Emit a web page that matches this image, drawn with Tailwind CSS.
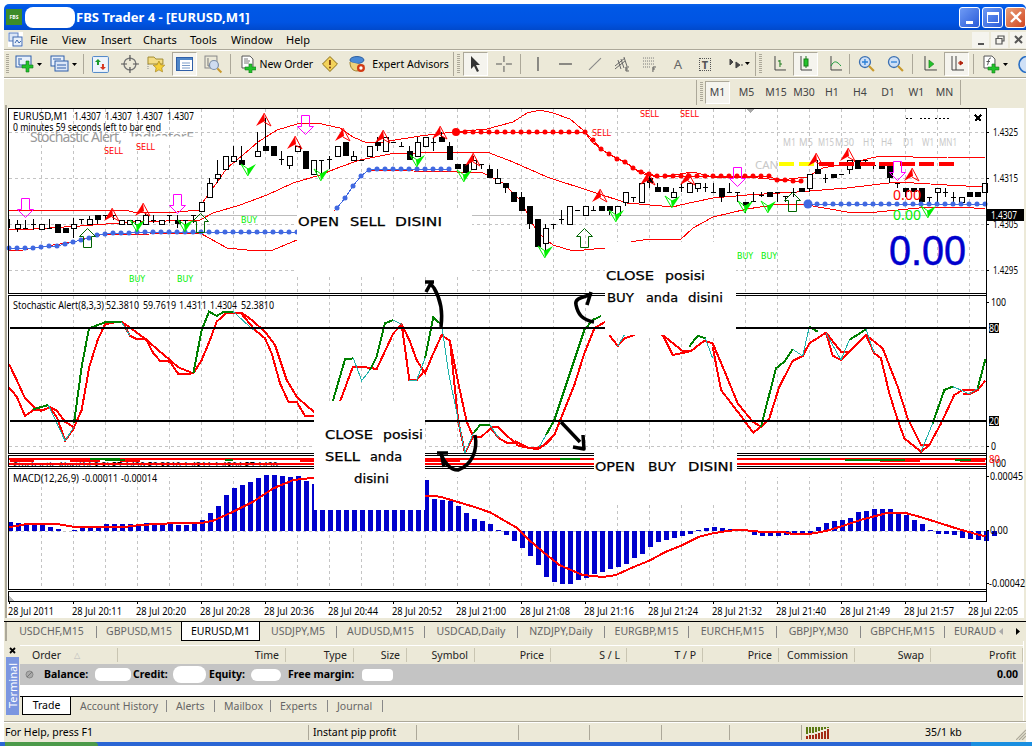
<!DOCTYPE html>
<html lang="en">
<head>
  <meta charset="UTF-8" />
  <title>FBS Trader 4 - [EURUSD,M1]</title>
  <script src="https://cdn.jsdelivr.net/npm/@tailwindcss/browser@4"></script>
</head>
<body class="w-[1032px] h-[746px] overflow-hidden bg-white font-['Noto_Sans',sans-serif] text-[10.5px] leading-none text-black">

<div class="pt-[4px] pl-[4px] w-[1026px]">
  <!-- title bar -->
  <div class="h-[26px] rounded-t-[5px] bg-[linear-gradient(#0a62ea_0%,#0058e6_12%,#0054e3_70%,#0049cc_100%)] flex items-center">
    <div class="ml-[2px] w-[16px] h-[16px] bg-[#3c8c28] flex items-center justify-center">
      <span class="text-[5px] font-bold text-white">FBS</span>
    </div>
    <div class="ml-[3px] w-[50px] h-[21px] rounded-[8px] bg-white"></div>
    <span class="ml-[1px] text-[13px] font-bold text-white">FBS Trader 4 - [EURUSD,M1]</span>
    <div class="ml-auto flex gap-[2px] mr-[0px]">
      <div class="w-[21px] h-[21px] rounded-[3px] border border-white bg-[linear-gradient(135deg,#6f9bf5,#2a5bd8)] flex items-end justify-center pb-[3px]"><div class="w-[7px] h-[3px] bg-white"></div></div>
      <div class="w-[21px] h-[21px] rounded-[3px] border border-white bg-[linear-gradient(135deg,#6f9bf5,#2a5bd8)] flex items-center justify-center"><div class="w-[12px] h-[11px] border border-white border-t-[3px]"></div></div>
      <div class="w-[21px] h-[21px] rounded-[3px] border border-white bg-[linear-gradient(135deg,#e9a27c,#d2451e)] flex items-center justify-center">
        <svg width="12" height="12" viewBox="0 0 12 12"><path d="M1 1 L11 11 M11 1 L1 11" stroke="#fff" stroke-width="2.4"/></svg>
      </div>
    </div>
  </div>

  <!-- menu -->
  <div class="h-[20px] bg-[#ece9d8] flex items-center border-b border-[#aca899] text-[11px]">
    <svg class="ml-[4px]" width="15" height="15" viewBox="0 0 15 15"><rect x="0" y="0" width="15" height="15" fill="#fff"/><rect x="1" y="1" width="9" height="8" fill="#dbe6f7" stroke="#5a7fc0"/><rect x="5" y="5" width="9" height="9" fill="#e8f0fb" stroke="#3f69ad"/><path d="M7 11l2-3 2 3 2-2" fill="none" stroke="#3f69ad"/></svg>
    <span class="ml-[7px] w-[32px]">File</span>
    <span class="w-[39px]">View</span>
    <span class="w-[42px]">Insert</span>
    <span class="w-[47px]">Charts</span>
    <span class="w-[41px]">Tools</span>
    <span class="w-[55px]">Window</span>
    <span>Help</span>
    <div class="ml-auto flex gap-[2px] text-[#444]">
      <div class="w-[17px] h-[16px] bg-[#f5f4ee] flex items-end justify-center pb-[3px]"><div class="w-[6px] h-[2px] bg-[#555]"></div></div>
      <div class="w-[17px] h-[16px] bg-[#f5f4ee] flex items-center justify-center">
        <svg width="10" height="10" viewBox="0 0 10 10"><path d="M3 3V1h6v5H7M1 3.5h6v5.500H1z" fill="none" stroke="#555" stroke-width="1.200"/></svg>
      </div>
      <div class="w-[16px] h-[16px] bg-[#f5f4ee] flex items-center justify-center">
        <svg width="9" height="9" viewBox="0 0 9 9"><path d="M1 1 L8 8 M8 1 L1 8" stroke="#555" stroke-width="2"/></svg>
      </div>
    </div>
  </div>

  <!-- main toolbar -->
  <div class="h-[28px] bg-[#ece9d8] border-t border-white border-b border-b-[#aca899] flex items-center overflow-hidden">
    <div class="ml-[2px] w-[3px] h-[20px] shrink-0 bg-[repeating-linear-gradient(#aca899_0,#aca899_1px,#ece9d8_1px,#ece9d8_2px)]"></div>
    <div class="ml-[6px] w-[35px] shrink-0 flex items-center">
      <svg width="20" height="18" viewBox="0 0 20 18"><rect x="1" y="1" width="15" height="11" fill="#e8f0fb" stroke="#2f5fa8"/><path d="M4 3v7h9M6 3v2" stroke="#2f5fa8" fill="none"/><path d="M11 6h3v4h4v3h-4v4h-3v-4H7v-3h4z" fill="#22c32b" stroke="#127a18" stroke-width=".6"/></svg>
      <svg class="ml-[2px]" width="5" height="3" viewBox="0 0 5 3"><path d="M0 0h5L2.500 3z" fill="#000"/></svg>
    </div>
    <div class="w-[33px] shrink-0 flex items-center">
      <svg width="20" height="18" viewBox="0 0 20 18"><rect x="1" y="1" width="13" height="10" fill="#e8f0fb" stroke="#2f5fa8"/><rect x="5" y="6" width="13" height="10" fill="#dbe6f7" stroke="#2f5fa8"/><path d="M3 4h8M7 10h9M7 13h9" stroke="#2f5fa8"/></svg>
      <svg class="ml-[2px]" width="5" height="3" viewBox="0 0 5 3"><path d="M0 0h5L2.500 3z" fill="#000"/></svg>
    </div>
    <div class="w-px h-[20px] bg-[#aca899]"></div>
    <svg class="ml-[8px]" width="17" height="17" viewBox="0 0 17 17"><rect x=".5" y=".5" width="16" height="16" rx="1" fill="#eef4fc" stroke="#4f86c8"/><path d="M6 3l3 3H7v3H5V6H3z" fill="#1c9a2a"/><path d="M11 14l-3-3h2V8h2v3h2z" fill="#d7351f"/></svg>
    <svg class="ml-[12px]" width="18" height="18" viewBox="0 0 18 18"><circle cx="9" cy="9" r="6" fill="none" stroke="#777" stroke-width="1.300"/><path d="M9 0v6M9 12v6M0 9h6M12 9h6" stroke="#555" stroke-width="1.200"/></svg>
    <svg class="ml-[8px]" width="19" height="18" viewBox="0 0 19 18"><path d="M1 2h6l2 2h7v5H1z" fill="#f3dc86" stroke="#a08a30"/><path d="M1 9v6" stroke="#888" stroke-dasharray="1 1"/><path d="M12 6l1.800 3.700 4 .5-3 2.700.8 4-3.600-2-3.600 2 .8-4-3-2.700 4-.5z" fill="#f6cf37" stroke="#a58315" stroke-width=".7"/></svg>
    <div class="ml-[6px] w-[25px] h-[24px] bg-[#f5f4ee] border border-t-[#aca899] border-l-[#aca899] border-r-white border-b-white flex items-center justify-center">
      <svg width="17" height="14" viewBox="0 0 17 14"><rect x=".5" y=".5" width="16" height="13" fill="#fff" stroke="#2f5fa8"/><rect x="1" y="1" width="15" height="2" fill="#4f86c8"/><rect x="1" y="3" width="3" height="10" fill="#4f86c8"/><path d="M6 6h8M6 8.500h8M6 11h8" stroke="#7a9bc8"/></svg>
    </div>
    <svg class="ml-[7px]" width="19" height="19" viewBox="0 0 19 19"><rect x="1" y="1" width="12" height="12" fill="#ece9d8" stroke="#888"/><path d="M4 3v8h8" stroke="#777" fill="none"/><circle cx="10" cy="10" r="4.500" fill="#cfdcf0" stroke="#7d8fa8" stroke-width="1.200"/><path d="M13.500 13.500l4 4" stroke="#c99a2e" stroke-width="2"/></svg>
    <div class="ml-[7px] w-px h-[20px] bg-[#aca899]"></div>
    <svg class="ml-[10px]" width="16" height="18" viewBox="0 0 16 18"><path d="M1 1h8l3 3v9H1z" fill="#fff" stroke="#555"/><path d="M3 4h4M3 6h6M3 8h5" stroke="#777"/><path d="M8 9h3v3h4v3h-4v3H8v-3H4v-3h4z" fill="#22c32b" stroke="#127a18" stroke-width=".6"/></svg>
    <span class="ml-[3px] w-[63px] shrink-0">New Order</span>
    <svg width="16" height="16" viewBox="0 0 16 16"><path d="M8 .5L15.500 8 8 15.500.5 8z" fill="#f3d25a" stroke="#8a6d16"/><path d="M8 4v5" stroke="#7a3d10" stroke-width="1.800"/><circle cx="8" cy="11.500" r="1" fill="#7a3d10"/></svg>
    <svg class="ml-[11px]" width="17" height="18" viewBox="0 0 17 18"><ellipse cx="8" cy="5" rx="7" ry="3.500" fill="#4b8ad6" stroke="#2a5c9c"/><path d="M1 7c0 6 3 9 7 9s6-2 7-6" fill="#f0d27a" stroke="#9a7d2a"/><circle cx="12" cy="13" r="4" fill="#d23a14"/><circle cx="12" cy="13" r="1.700" fill="#fff"/></svg>
    <span class="ml-[6px] w-[81px] shrink-0">Expert Advisors</span>
    <div class="w-px h-[24px] bg-[#aca899]"></div>
    <div class="ml-[3px] w-[3px] h-[20px] shrink-0 bg-[repeating-linear-gradient(#aca899_0,#aca899_1px,#ece9d8_1px,#ece9d8_2px)]"></div>
    <div class="ml-[3px] w-[25px] h-[24px] bg-[#f5f4ee] border border-t-[#aca899] border-l-[#aca899] border-r-white border-b-white flex items-center justify-center">
      <svg width="11" height="16" viewBox="0 0 11 16"><path d="M1 0v13l3-3 3 6 2-1-3-6h4z" fill="#333"/></svg>
    </div>
    <svg class="ml-[8px]" width="16" height="16" viewBox="0 0 16 16"><path d="M8 0v6M8 10v6M0 8h6M10 8h6" stroke="#555"/></svg>
    <div class="ml-[8px] w-px h-[20px] bg-[#aca899]"></div>
    <svg class="ml-[16px]" width="2" height="14" viewBox="0 0 2 14"><path d="M1 0v14" stroke="#555" stroke-width="1.300"/></svg>
    <svg class="ml-[20px]" width="13" height="2" viewBox="0 0 13 2"><path d="M0 1h13" stroke="#555" stroke-width="1.300"/></svg>
    <svg class="ml-[16px]" width="14" height="14" viewBox="0 0 14 14"><path d="M1 13L13 1" stroke="#888" stroke-width="1.100"/></svg>
    <svg class="ml-[12px]" width="16" height="16" viewBox="0 0 16 16"><path d="M1 10l10-8M1 13l10-8M4 4l3 9M7 3l3 9M10 1l3 9" stroke="#666" fill="none"/><path d="M12 11h3M12 13h2M12 15h3M12 11v4" stroke="#555"/></svg>
    <svg class="ml-[12px]" width="15" height="16" viewBox="0 0 15 16"><path d="M1 2h12M1 5h12M1 8h12M1 11h8" stroke="#777" stroke-dasharray="1 1"/><path d="M11 11h3M11 13h2M11 11v5" stroke="#555"/></svg>
    <span class="ml-[17px] w-[9px] shrink-0 text-[13px] text-[#666]">A</span>
    <div class="ml-[16px] w-[12px] h-[13px] shrink-0 border border-dotted border-[#555] flex items-center justify-center text-[11px] font-bold text-[#555]">T</div>
    <svg class="ml-[17px]" width="24" height="13" viewBox="0 0 24 13"><path d="M2 1l3 3-3 3zM8 4l4 3-4 3zM13 7h2" fill="#444" stroke="#444"/><path d="M17 4h5l-2.500 3z" fill="#000"/></svg>
    <div class="ml-[3px] w-px h-[24px] bg-[#aca899]"></div>
    <div class="ml-[3px] w-[3px] h-[20px] shrink-0 bg-[repeating-linear-gradient(#aca899_0,#aca899_1px,#ece9d8_1px,#ece9d8_2px)]"></div>
    <svg class="ml-[10px]" width="14" height="16" viewBox="0 0 14 16"><path d="M3 0v14h11" stroke="#444" fill="none"/><path d="M8 4v7M8 5H6M8 8h2" stroke="#1a7a1a" fill="none"/></svg>
    <div class="ml-[7px] w-[25px] h-[24px] bg-[#f5f4ee] border border-t-[#aca899] border-l-[#aca899] border-r-white border-b-white flex items-center justify-center">
      <svg width="14" height="16" viewBox="0 0 14 16"><path d="M3 0v14h11" stroke="#444" fill="none"/><rect x="6" y="3" width="4" height="7" fill="#22c32b" stroke="#1a7a1a"/><path d="M8 0v3M8 10v2" stroke="#1a7a1a"/></svg>
    </div>
    <svg class="ml-[10px]" width="15" height="16" viewBox="0 0 15 16"><path d="M3 0v14h12" stroke="#444" fill="none"/><path d="M3 10c3-6 6-5 10 0" stroke="#1a9a3a" fill="none"/></svg>
    <div class="ml-[7px] w-px h-[20px] bg-[#aca899]"></div>
    <svg class="ml-[8px]" width="17" height="18" viewBox="0 0 17 18"><circle cx="7" cy="7" r="5.500" fill="#cfe0f6" stroke="#3b6fb0" stroke-width="1.300"/><path d="M4 7h6M7 4v6" stroke="#2a7fd6" stroke-width="1.300"/><path d="M11 11l5 5" stroke="#c99a2e" stroke-width="2.200"/></svg>
    <svg class="ml-[12px]" width="17" height="18" viewBox="0 0 17 18"><circle cx="7" cy="7" r="5.500" fill="#cfe0f6" stroke="#3b6fb0" stroke-width="1.300"/><path d="M4 7h6" stroke="#2a7fd6" stroke-width="1.300"/><path d="M11 11l5 5" stroke="#c99a2e" stroke-width="2.200"/></svg>
    <div class="ml-[8px] w-px h-[20px] bg-[#aca899]"></div>
    <svg class="ml-[9px]" width="15" height="16" viewBox="0 0 15 16"><path d="M3 0v14h12" stroke="#444" fill="none"/><path d="M7 4l5 4-5 4z" fill="#22c32b" stroke="#1a7a1a" stroke-width=".6"/></svg>
    <div class="ml-[7px] w-[25px] h-[24px] bg-[#f5f4ee] border border-t-[#aca899] border-l-[#aca899] border-r-white border-b-white flex items-center justify-center">
      <svg width="15" height="16" viewBox="0 0 15 16"><path d="M3 0v14h12M7 0v14" stroke="#444" fill="none"/><path d="M9 7h3M14 7l-3-2v4z" fill="#b0200a" stroke="#b0200a"/></svg>
    </div>
    <div class="ml-[4px] w-px h-[20px] bg-[#aca899]"></div>
    <svg class="ml-[9px]" width="19" height="19" viewBox="0 0 19 19"><path d="M1 1h8l3 3v9H1z" fill="#fff" stroke="#555"/><path d="M4 10c1 0 1-1 1.500-4S7 3 8 3M3.500 6.500h3.500" stroke="#555" fill="none"/><path d="M9 9h3v3h4v3h-4v3H9v-3H5v-3h4z" fill="#22c32b" stroke="#127a18" stroke-width=".6"/></svg>
    <svg class="ml-[1px]" width="5" height="3" viewBox="0 0 5 3"><path d="M0 0h5L2.500 3z" fill="#000"/></svg>
    <svg class="ml-[10px] shrink-0" width="8" height="17" viewBox="0 0 8 17"><circle cx="9" cy="8.500" r="8" fill="#cfe0f6" stroke="#2a6fc4" stroke-width="1.600"/><path d="M9 4v5" stroke="#2a5fa0" fill="none"/></svg>
  </div>

  <!-- timeframe toolbar -->
  <div class="h-[27px] bg-[#ece9d8] flex items-center border-t border-white">
    <div class="ml-[692px] w-px h-[25px] bg-[#aca899]"></div>
    <div class="ml-[3px] w-[3px] h-[20px] bg-[repeating-linear-gradient(#aca899_0,#aca899_1px,#ece9d8_1px,#ece9d8_2px)]"></div>
    <div class="ml-[2px] w-[25px] h-[23px] bg-[#f5f4ee] border border-t-[#aca899] border-l-[#aca899] border-r-white border-b-white flex items-center justify-center text-[#444]">M1</div>
    <span class="w-[31px] text-center ml-[1px] text-[#444]">M5</span>
    <span class="w-[28px] text-center text-[#444]">M15</span>
    <span class="w-[28px] text-center text-[#444]">M30</span>
    <span class="w-[28px] text-center text-[#444]">H1</span>
    <span class="w-[28px] text-center text-[#444]">H4</span>
    <span class="w-[28px] text-center text-[#444]">D1</span>
    <span class="w-[29px] text-center text-[#444]">W1</span>
    <span class="w-[27px] text-center text-[#444]">MN</span>
    <div class="ml-[2px] w-px h-[25px] bg-[#aca899]"></div>
  </div>

  <!-- chart, drawn in page coordinates -->
  <svg id="chart" class="block text-[10.5px]" width="1022" height="516" viewBox="4 105 1022 516" shape-rendering="crispEdges">
    <rect x="4" y="105" width="1022" height="516" fill="#fff"/>
    <rect x="4" y="105" width="1022" height="3" fill="#ece9d8"/>
    <rect x="4" y="105" width="1" height="516" fill="#ece9d8"/>
    <rect x="5" y="105" width="2" height="516" fill="#aca899"/>
    <rect x="1024" y="105" width="2" height="516" fill="#ece9d8"/>
    <rect x="4" y="618" width="1022" height="3" fill="#ece9d8"/>
    <g id="plot"></g>
    <g>
      <g id="heads" lengthAdjust="spacingAndGlyphs"></g>
      <text x="30" y="142" fill="#999" class="text-[14px]" textLength="92">Stochastic Alert,</text>
      <g fill="#c8c8c8" class="text-[11.5px]">
        <text x="783" y="146" textLength="13" lengthAdjust="spacingAndGlyphs">M1</text><text x="799" y="146" textLength="14" lengthAdjust="spacingAndGlyphs">M5</text><text x="818" y="146" textLength="16" lengthAdjust="spacingAndGlyphs">M15</text><text x="835" y="146" textLength="19" lengthAdjust="spacingAndGlyphs">M30</text><text x="863" y="146" textLength="11" lengthAdjust="spacingAndGlyphs">H1</text><text x="881" y="146" textLength="11" lengthAdjust="spacingAndGlyphs">H4</text><text x="903" y="146" textLength="11" lengthAdjust="spacingAndGlyphs">D1</text><text x="922" y="146" textLength="12" lengthAdjust="spacingAndGlyphs">W1</text><text x="939" y="146" textLength="18" lengthAdjust="spacingAndGlyphs">MN1</text>
        <text x="755" y="169">CAN</text>
      </g>
      <text x="893" y="200" fill="#ff0000" class="text-[14px]" textLength="28">0.00</text>
      <text x="893" y="220" fill="#00f000" class="text-[14px]" textLength="28">0.00</text>
      <text x="889" y="265" fill="#0000cd" stroke="#0000cd" stroke-width=".5" class="text-[42px] font-['Liberation_Sans',sans-serif]" textLength="77" lengthAdjust="spacingAndGlyphs">0.00</text>
      <g fill="#ff0000" class="text-[8px] font-['DejaVu_Sans',sans-serif]">
        <text x="104" y="154">SELL</text><text x="136" y="150">SELL</text><text x="640" y="117">SELL</text><text x="680" y="117">SELL</text><text x="592" y="136">SELL</text>
      </g>
      <g fill="#00f000" class="text-[8px] font-['DejaVu_Sans',sans-serif]">
        <text x="129" y="282">BUY</text><text x="177" y="282">BUY</text><text x="241" y="223">BUY</text><text x="737" y="259">BUY</text><text x="761" y="259">BUY</text>
      </g>
    </g>
    <g id="masks"></g>
    <g class="font-['DejaVu_Sans',sans-serif] text-[12px]" fill="#000" stroke="#000" stroke-width=".25">
      <text x="298" y="226" textLength="41" lengthAdjust="spacingAndGlyphs">OPEN</text>
      <text x="350" y="226" textLength="35" lengthAdjust="spacingAndGlyphs">SELL</text>
      <text x="395" y="226" textLength="47" lengthAdjust="spacingAndGlyphs">DISINI</text>
      <text x="606" y="280" textLength="48" lengthAdjust="spacingAndGlyphs">CLOSE</text>
      <text x="665" y="280" textLength="40" lengthAdjust="spacingAndGlyphs">posisi</text>
      <text x="607" y="302" textLength="27" lengthAdjust="spacingAndGlyphs">BUY</text>
      <text x="646" y="302" textLength="32" lengthAdjust="spacingAndGlyphs">anda</text>
      <text x="688" y="302" textLength="35" lengthAdjust="spacingAndGlyphs">disini</text>
      <text x="325" y="439" textLength="48" lengthAdjust="spacingAndGlyphs">CLOSE</text>
      <text x="383" y="439" textLength="40" lengthAdjust="spacingAndGlyphs">posisi</text>
      <text x="325" y="461" textLength="35" lengthAdjust="spacingAndGlyphs">SELL</text>
      <text x="370" y="461" textLength="32" lengthAdjust="spacingAndGlyphs">anda</text>
      <text x="354" y="483" textLength="35" lengthAdjust="spacingAndGlyphs">disini</text>
      <text x="595" y="471" textLength="40" lengthAdjust="spacingAndGlyphs">OPEN</text>
      <text x="648" y="471" textLength="28" lengthAdjust="spacingAndGlyphs">BUY</text>
      <text x="688" y="471" textLength="45" lengthAdjust="spacingAndGlyphs">DISINI</text>
    </g>
    <g fill="none" stroke="#000" stroke-width="3.5" stroke-linejoin="round" shape-rendering="auto">
      <path d="M441 327C443 312 440 298 434 288L430 283M425 282H434M431 283L426 292"/>
      <path d="M594 322C582 320 578 314 576 305C574 298 584 297 592 294M591 292L587 305"/>
      <path d="M561 422L580 442M583 435L584 449L573 447"/>
      <path d="M475 435C478 450 472 465 458 470C450 470 444 462 441 454M437 453H448M441 453L444 467"/>
    </g>
    <g id="axis"></g>
  </svg>

  <!-- symbol tabs -->
  <div class="h-[20px] bg-[#ece9d8] border-t border-black flex items-center text-[#666]">
    <div class="w-[2px] h-[19px] bg-[#aca899] ml-[1px]"></div>
    <span class="w-[89px] text-center">USDCHF,M15</span>
    <div class="w-px h-[12px] bg-[#888]"></div>
    <span class="w-[84px] text-center">GBPUSD,M15</span>
    <div class="w-[79px] h-[19px] bg-white border-x border-b border-black text-black flex items-center justify-center">EURUSD,M1</div>
    <span class="w-[76px] text-center">USDJPY,M5</span>
    <div class="w-px h-[12px] bg-[#888]"></div>
    <span class="w-[87px] text-center">AUDUSD,M15</span>
    <div class="w-px h-[12px] bg-[#888]"></div>
    <span class="w-[92px] text-center">USDCAD,Daily</span>
    <div class="w-px h-[12px] bg-[#888]"></div>
    <span class="w-[86px] text-center">NZDJPY,Daily</span>
    <div class="w-px h-[12px] bg-[#888]"></div>
    <span class="w-[83px] text-center">EURGBP,M15</span>
    <div class="w-px h-[12px] bg-[#888]"></div>
    <span class="w-[87px] text-center">EURCHF,M15</span>
    <div class="w-px h-[12px] bg-[#888]"></div>
    <span class="w-[83px] text-center">GBPJPY,M30</span>
    <div class="w-px h-[12px] bg-[#888]"></div>
    <span class="w-[83px] text-center">GBPCHF,M15</span>
    <div class="w-px h-[12px] bg-[#888]"></div>
    <span class="ml-[9px] w-[42px] overflow-hidden whitespace-nowrap">EURAUD</span>
    <svg class="ml-[3px]" width="4" height="7" viewBox="0 0 4 7"><path d="M4 0v7L0 3.500z" fill="#aaa"/></svg>
    <svg class="ml-[13px]" width="4" height="7" viewBox="0 0 4 7"><path d="M0 0v7l4-3.500z" fill="#000"/></svg>
  </div>

  <!-- terminal -->
  <div class="h-[81px] bg-[#ece9d8] flex border-b border-[#aca899]">
    <div class="w-[16px] flex flex-col items-center pt-[6px]">
      <svg width="7" height="7" viewBox="0 0 7 7"><path d="M1 1l5 5M6 1L1 6" stroke="#000" stroke-width="1.800"/></svg>
      <div class="mt-[3px] w-[13px] h-[58px] bg-[#7b96e0] text-white flex items-center justify-center">
        <span class="[writing-mode:vertical-rl] rotate-180 text-[11px]">Terminal</span>
      </div>
    </div>
    <div class="w-[1004px] flex flex-col pt-[4px] border-r border-white">
      <div class="h-[19px] flex items-center border-t border-white text-[#222]">
        <div class="w-[98px] h-[14px] flex items-center pl-[12px] border-r border-[#c9c5b2]">Order<span class="ml-[13px] text-[#bbb] text-[8px]">△</span></div>
        <div class="w-[168px] h-[14px] flex items-center justify-end pr-[6px] border-r border-[#c9c5b2]">Time</div>
        <div class="w-[68px] h-[14px] flex items-center justify-end pr-[6px] border-r border-[#c9c5b2]">Type</div>
        <div class="w-[53px] h-[14px] flex items-center justify-end pr-[6px] border-r border-[#c9c5b2]">Size</div>
        <div class="w-[68px] h-[14px] flex items-center justify-end pr-[6px] border-r border-[#c9c5b2]">Symbol</div>
        <div class="w-[76px] h-[14px] flex items-center justify-end pr-[6px] border-r border-[#c9c5b2]">Price</div>
        <div class="w-[76px] h-[14px] flex items-center justify-end pr-[6px] border-r border-[#c9c5b2]">S / L</div>
        <div class="w-[76px] h-[14px] flex items-center justify-end pr-[6px] border-r border-[#c9c5b2]">T / P</div>
        <div class="w-[76px] h-[14px] flex items-center justify-end pr-[6px] border-r border-[#c9c5b2]">Price</div>
        <div class="w-[76px] h-[14px] flex items-center justify-end pr-[6px] border-r border-[#c9c5b2]">Commission</div>
        <div class="w-[76px] h-[14px] flex items-center justify-end pr-[6px] border-r border-[#c9c5b2]">Swap</div>
        <div class="w-[92px] h-[14px] flex items-center justify-end pr-[6px] border-r border-[#c9c5b2]">Profit</div>
      </div>
      <div class="h-[21px] bg-[#c4c4c4] flex items-center font-bold">
        <svg class="ml-[5px]" width="9" height="9" viewBox="0 0 9 9"><circle cx="4.500" cy="4.500" r="3.500" fill="#aaa" stroke="#888"/><path d="M2 7l5-5" stroke="#777"/></svg>
        <span class="ml-[10px] w-[47px]">Balance:</span>
        <div class="ml-[4px] w-[36px] h-[13px] rounded-[5px] bg-white"></div>
        <span class="ml-[2px] w-[38px]">Credit:</span>
        <div class="ml-[2px] w-[33px] h-[17px] rounded-[8px] bg-white"></div>
        <span class="ml-[3px] w-[39px]">Equity:</span>
        <div class="ml-[3px] w-[30px] h-[12px] rounded-[6px] bg-white"></div>
        <span class="ml-[7px] w-[70px]">Free margin:</span>
        <div class="ml-[4px] w-[31px] h-[12px] rounded-[4px] bg-white"></div>
        <span class="ml-auto mr-[5px]">0.00</span>
      </div>
      <div class="h-[11px] bg-white"></div>
      <div class="h-[21px] border-t border-black flex items-start text-[#666]">
        <div class="ml-[2px] w-[49px] h-[18px] bg-white border-x border-b border-black text-black flex items-center justify-center">Trade</div>
        <span class="ml-[9px] w-[86px] h-[18px] flex items-center">Account History</span>
        <div class="mt-[3px] w-px h-[12px] bg-[#888]"></div>
        <span class="ml-[9px] w-[38px] h-[18px] flex items-center">Alerts</span>
        <div class="mt-[3px] w-px h-[12px] bg-[#888]"></div>
        <span class="ml-[9px] w-[46px] h-[18px] flex items-center">Mailbox</span>
        <div class="mt-[3px] w-px h-[12px] bg-[#888]"></div>
        <span class="ml-[9px] w-[47px] h-[18px] flex items-center">Experts</span>
        <div class="mt-[3px] w-px h-[12px] bg-[#888]"></div>
        <span class="ml-[9px] w-[45px] h-[18px] flex items-center">Journal</span>
        <div class="mt-[3px] w-px h-[12px] bg-[#888]"></div>
      </div>
    </div>
  </div>

  <!-- status bar -->
  <div class="h-[20px] bg-[#ece9d8] flex items-center border-t border-white">
    <span class="w-[304px] pl-[1px]">For Help, press F1</span>
    <div class="w-[108px] h-[15px] flex items-center pl-[4px] border-l border-[#aca899]">Instant pip profit</div>
    <div class="w-[102px] h-[15px] border-l border-[#aca899]"></div>
    <div class="w-[71px] h-[15px] border-l border-[#aca899]"></div>
    <div class="w-[72px] h-[15px] border-l border-[#aca899]"></div>
    <div class="w-[68px] h-[15px] border-l border-[#aca899]"></div>
    <div class="w-[72px] h-[15px] border-l border-[#aca899]"></div>
    <div class="w-[66px] h-[15px] border-l border-[#aca899] flex items-center pl-[4px]">
      <svg width="24" height="12" viewBox="0 0 24 12"><path d="M1 0v7M4 0v6M7 0v6M10 0v5M13 0v4M16 0v3M19 0v2M22 0v1" stroke="#5b7a12" stroke-width="2"/><path d="M1 9v3M4 8v4M7 8v4M10 7v5M13 6v6M16 5v7M19 4v8M22 2v10" stroke="#a32a14" stroke-width="2"/></svg>
    </div>
    <span class="ml-[58px]">35/1 kb</span>
    <svg class="ml-auto" width="10" height="14" viewBox="0 0 10 14"><path d="M0 14L10 4M3 14L10 7M6 14l4-4" stroke="#aca899" stroke-width="1.200"/></svg>
  </div>
</div>

<!-- taskbar sliver -->
<div class="h-[4px] bg-[#2a66d4] flex">
  <div class="ml-[5px] w-[93px] bg-[#4c9a4a] rounded-tr-[4px]"></div>
  <div class="ml-auto w-[61px] bg-[#1a8fe0]"></div>
</div>

<script>
  // reference read at 3x, so coordinates come in zoomed units
  const z = (ox, oy, pts) => pts.map(([x, y]) => [ox + x / 3, oy + y / 3]);
  const line = (pts, color, w) =>
    `<polyline points="${pts.map(p => p.join(",")).join(" ")}" fill="none" stroke="${color}" stroke-width="${w}"/>`;
  // tahoma is narrower than what we have here, squeeze to the measured width
  const tx = (t, x, y, w, fill = "#000") =>
    `<text x="${x}" y="${y}" fill="${fill}" textLength="${w}" lengthAdjust="spacingAndGlyphs">${t}</text>`;

  const RIGHT = 986, L = 8;
  const X = k => 9 + 8 * k;
  let s = "";

  // grid
  const grid = 'stroke-dasharray="3 3"';
  for (let x = 41; x < RIGHT; x += 32) {
    s += `<path d="M${x} 109V293M${x} 296V452M${x} 469V589" stroke="#c4c4c4" ${grid}/>`;
  }
  for (const y of [132, 178, 224, 270]) s += `<path d="M9 ${y}H${RIGHT}" stroke="#c4c4c4" ${grid}/>`;
  s += `<path d="M9 446.500H${RIGHT}" stroke="#c4c4c4" ${grid}/>`;
  s += `<path d="M9 215.500H${RIGHT}" stroke="#bdbdbd"/>`;
  s += `<path d="M9 531.500H${RIGHT}" stroke="#c4c4c4" ${grid}/>`;

  // bollinger bands
  const red = "#f00";
  s += line([[9,210],[125,210],[133,212],[165,213],[200,210],[203,202],[213,188],[227,168],[243,155],[258,142],[277,130],[297,124],[317,123],[340,128],[353,137],[367,143],[383,142],[420,136],[453,132],[487,129],[513,122],[527,113],[540,110],[553,113],[570,119],[583,130],[593,143],[607,153],[627,163],[640,173],[657,177],[680,174],[693,172],[713,177],[747,177],[780,180],[807,177],[823,168],[850,163],[880,156],[913,157],[947,157],[985,158]], red, 1);
  s += line([[9,230],[33,229],[80,226],[133,222],[200,220],[213,213],[240,205],[267,195],[293,183],[320,175],[340,167],[360,160],[390,154],[440,152],[487,152],[513,162],[547,177],[593,192],[627,203],[673,207],[680,205],[713,198],[747,195],[797,192],[847,188],[897,182],[947,185],[985,187]], red, 1);
  s += line([[9,250],[17,251],[40,247],[73,242],[100,235],[200,233],[227,248],[257,251],[273,250],[297,240],[330,216],[337,208],[345,198],[353,186],[361,176],[369,170],[457,172],[483,173],[503,183],[520,200],[537,232],[553,245],[573,251],[605,248],[620,244],[636,241],[650,239],[680,240],[693,228],[713,217],[747,209],[780,204],[807,205],[847,212],[867,213],[887,211],[930,207],[963,207],[985,209]], red, 1);

  // candles [x, bodyTop, bodyBottom, wickTop, wickBottom, fill] : w hollow, b solid, none = dash only
  const c = [
    [9,0,0,219,228],[17,224,228,220,232,"w"],[25,228,229,220,229],[33,224,225,219,230],[41,224,229,224,229,"w"],[49,228,229,219,229],
    [57,224,233,224,233,"b"],[65,228,233,228,233,"b"],[73,224,228,218,238,"w"],[81,219,220,219,224],[89,219,224,216,224,"w"],[97,215,220,215,224,"b"],
    [105,215,216,215,220],[113,215,216,215,220],[121,220,224,220,224,"w"],[129,220,224,220,224,"w"],[137,220,224,220,224,"w"],[145,215,224,213,224,"w"],
    [153,220,221,215,223],[161,220,224,220,224,"w"],[169,215,216,215,223],[177,220,224,215,228,"b"],[185,220,221,220,228],[193,215,216,215,223],
    [201,202,211,202,211,"w"],[209,183,197,178,197,"w"],[217,174,178,160,183,"w"],[225,156,169,156,169,"w"],[233,156,161,146,161,"w"],[241,160,165,146,165,"b"],
    [257,151,156,132,156,"w"],[265,146,151,118,151,"b"],[273,146,156,146,156,"b"],[281,159,160,151,165],[289,156,165,156,169,"w"],[297,146,151,146,151,"w"],
    [305,151,169,151,169,"b"],[313,160,174,160,174,"w"],[321,160,161,160,179],[329,159,160,156,169],[337,146,156,146,156,"w"],[345,142,156,142,156,"b"],
    [353,156,160,151,160,"w"],[361,160,161,160,161],[369,146,156,146,156,"w"],[377,142,146,137,151,"b"],[385,137,151,137,151,"w"],[393,142,143,142,143],
    [401,146,147,142,147],[409,151,160,146,160,"b"],[417,142,156,137,156,"w"],[425,137,146,137,146,"w"],[433,142,143,137,151],[441,137,142,132,142,"b"],
    [449,146,160,142,160,"b"],[457,164,169,164,169,"b"],[465,164,173,164,173,"b"],[473,160,169,156,169,"w"],[481,164,165,164,169],[489,169,178,165,178,"b"],
    [497,178,183,169,183,"w"],[505,183,188,183,193,"b"],[513,192,202,192,202,"b"],[521,197,211,192,211,"b"],[529,206,224,206,229,"b"],[537,219,247,219,247,"b"],
    [545,228,243,224,252,"w"],[553,224,225,224,229],[561,219,220,210,224],[569,206,224,206,224,"w"],[577,210,211,210,211],[585,206,215,206,215,"w"],
    [593,210,211,206,211],[601,206,211,206,211,"b"],[609,206,211,206,215,"b"],[617,206,215,206,215,"w"],[625,192,202,192,206,"w"],[633,197,198,197,202],
    [641,183,202,183,202,"w"],[649,178,183,174,188,"b"],[657,187,192,183,192,"b"],[665,187,192,187,192,"b"],[673,192,197,188,197,"w"],[681,187,188,183,192],
    [689,183,192,183,192,"w"],[697,183,188,183,192,"w"],[705,187,188,183,192],[713,192,193,183,193],[721,188,197,188,202,"b"],[729,192,193,183,193],
    [737,192,193,192,202],[745,202,206,202,213,"b"],[753,201,202,192,202],[761,195,196,192,197],[769,192,197,192,197,"b"],[777,192,193,192,202],
    [785,196,197,196,202],[793,192,193,188,197],[801,188,192,188,192,"b"],[809,174,188,174,192,"w"],[817,169,174,160,174,"b"],[825,178,179,174,183],
    [833,174,178,174,178,"b"],[841,174,175,174,175],[849,160,169,160,174,"w"],[857,160,169,160,169,"b"],[865,160,161,160,165],[873,165,166,165,169],
    [881,165,169,165,169,"b"],[889,165,178,165,183,"b"],[897,183,184,183,188],[905,188,192,188,197,"b"],[913,188,192,188,192,"b"],[921,188,202,188,202,"b"],
    [929,197,198,197,205],[937,188,192,188,202,"w"],[945,192,193,188,197],[953,197,198,192,202],[961,197,202,197,202,"w"],[969,192,197,192,197,"b"],
    [977,192,197,192,197,"b"],[984,183,192,183,192,"w"]
  ];
  for (const [x, t, b, wt, wb, f] of c) {
    s += `<path d="M${x}.5 ${wt}V${wb}" stroke="#000"/>`;
    if (f === "w") s += `<rect x="${x - 2}.5" y="${t}.5" width="5" height="${b - t}" fill="#fff" stroke="#000"/>`;
    else if (f === "b") s += `<rect x="${x - 2}" y="${t}" width="6" height="${b - t}" fill="#000"/>`;
    else s += `<path d="M${x - 2} ${t}.5H${x + 3}" stroke="#000"/>`;
  }

  // dot lines
  const dots = (pts, color, r = 2.5) => pts.map(([x, y]) => `<circle cx="${x}" cy="${y}" r="${r}" fill="${color}" shape-rendering="auto"/>`).join("");
  const blue = "#4169e1";
  const b1 = [[9,248],[17,248],[25,248],[33,248],[41,247],[49,246],[57,246],[65,244],[73,242],[81,240],[89,238],[97,235],[105,234],[113,233],[121,233],[129,233]];
  for (let x = 137; x <= 297; x += 8) b1.push([x, 232]);
  s += line(b1, blue, 1) + dots(b1, blue);
  const b2 = [[337,208],[345,198],[353,186],[361,176],[369,170]];
  for (let x = 377; x <= 449; x += 8) b2.push([x, 169]);
  s += line(b2, blue, 1) + dots(b2, blue);
  const r1 = [[456,132]];
  for (let x = 465; x <= 585; x += 8) r1.push([x, 132]);
  r1.push([593,140],[601,149],[609,154],[617,159],[625,162],[633,168],[641,172],[649,174]);
  for (let x = 657; x <= 769; x += 8) r1.push([x, 176]);
  r1.push([777,180],[785,180],[793,181],[801,181]);
  s += line(r1, red, 1) + dots(r1, red) + `<circle cx="456" cy="132" r="4" fill="${red}" shape-rendering="auto"/>`;
  const b3 = [];
  for (let x = 817; x <= 985; x += 8) b3.push([x, 204]);
  s += dots(b3, blue) + `<path d="M808 204H985" stroke="${blue}"/><circle cx="808" cy="204" r="4.500" fill="${blue}" shape-rendering="auto"/>`;

  // dashes on the dashboard line
  for (const x of [779, 799]) s += `<rect x="${x}" y="162" width="15" height="4" fill="#ff0"/>`;
  for (const x of [819, 839, 860, 879, 900, 919, 939]) s += `<rect x="${x}" y="162" width="15" height="4" fill="#f00"/>`;

  // signal arrows
  const up = [[264,113],[295,136],[143,203],[112,208],[343,128],[383,130],[440,126],[473,153],[600,189],[648,172],[688,172],[816,153],[848,148],[912,168]];
  for (const [x, y] of up) {
    s += `<g shape-rendering="auto"><path d="M${x} ${y}L${x - 8} ${y + 13}L${x + 1} ${y + 8}z" fill="${red}"/><path d="M${x} ${y}L${x + 7} ${y + 13}L${x} ${y + 9}" fill="none" stroke="${red}"/></g>`;
  }
  const dn = [[137,232],[185,232],[248,176],[321,181],[417,167],[464,182],[545,258],[616,222],[672,208],[745,213],[768,213],[928,218]];
  for (const [x, y] of dn) {
    s += `<g shape-rendering="auto"><path d="M${x} ${y}L${x + 8} ${y - 12}L${x - 1} ${y - 7}z" fill="#00f000"/><path d="M${x} ${y}L${x - 7} ${y - 12}L${x} ${y - 7}" fill="none" stroke="#00f000"/></g>`;
  }
  for (const [x, y] of [[25,198],[177,194],[305,115],[737,167],[897,161]]) {
    s += `<path d="M${x - 4}.5 ${y}.5H${x + 4}.5V${y + 11}.5H${x + 8}.5L${x}.5 ${y + 19}.5L${x - 8}.5 ${y + 11}.5H${x - 4}.5Z" fill="none" stroke="#f0f" shape-rendering="auto"/>`;
  }
  for (const [x, y] of [[87,228],[200,213],[584,228],[792,192]]) {
    s += `<path d="M${x}.5 ${y}.5L${x + 8}.5 ${y + 8}.5H${x + 4}.5V${y + 19}.5H${x - 4}.5V${y + 8}.5H${x - 8}.5Z" fill="none" stroke="#006400" shape-rendering="auto"/>`;
  }

  // stochastic
  s += line(z(0,290,[[27,222],[50,270],[75,325],[100,350],[125,362],[150,352],[170,362],[195,395],[222,412],[245,360],[268,230],[293,150],[315,103],[345,97],[367,97],[400,120],[440,150],[480,185],[510,210],[535,232],[580,250],[605,210],[630,150],[650,95],[680,68],[725,68],[755,90],[795,125],[825,165],[860,270],[890,320],[925,352],[942,365],[1000,380],[1020,335],[1058,232],[1085,230],[1130,237],[1180,130],[1205,103],[1228,150],[1250,210],[1275,250],[1300,190],[1325,135],[1350,153],[1375,280],[1400,395],[1420,440],[1445,440],[1475,412],[1495,412],[1520,437],[1548,460]]).concat(z(516,290,[[0,455],[40,475],[70,472],[90,462],[115,435],[135,385],[175,285],[205,190],[235,115],[265,97],[300,60],[440,135],[500,183],[525,183],[565,152],[590,160],[620,230],[665,340],[710,395],[735,410],[760,385],[790,290],[830,213],[860,198],[880,160],[930,128],[975,185],[1000,185],[1050,135],[1100,175],[1145,290],[1175,385],[1215,465],[1240,465],[1275,400],[1315,315],[1340,300],[1385,300],[1408,272]])), red, 2);
  s += line(z(0,290,[[27,292],[50,320],[75,378],[100,360],[125,362],[150,352],[172,385],[195,452],[222,415]]), red, 2);
  s += line(z(0,290,[[367,97],[390,137],[410,147],[438,148],[460,190],[480,212],[510,215],[535,252],[555,252],[580,250]]), red, 2);
  s += line(z(0,290,[[725,72],[765,120],[795,145],[815,190],[840,280],[865,335],[890,335],[915,378],[942,378]]), red, 2);
  s += line(z(0,290,[[1205,103],[1228,270],[1250,270],[1275,240]]), red, 2);
  s += line(z(0,290,[[1350,153],[1375,395],[1395,488],[1420,440]]), red, 2);
  s += line(z(0,290,[[1470,412],[1497,445],[1520,458],[1548,458]]), red, 2);
  s += line(z(516,290,[[0,465],[30,472],[65,478],[85,465],[115,435]]), red, 2);
  s += line(z(516,290,[[280,135],[305,168],[325,145],[355,135],[390,110]]), red, 2);
  s += line(z(516,290,[[440,135],[470,195],[495,190],[525,183]]), red, 2);
  s += line(z(516,290,[[590,170],[615,300],[665,365],[712,428],[735,410]]), red, 2);
  s += line(z(516,290,[[930,128],[950,197],[975,210],[1000,185]]), red, 2);
  s += line(z(516,290,[[1050,135],[1075,190],[1095,205],[1120,310],[1145,390],[1165,445],[1215,485],[1240,465]]), red, 2);
  s += line(z(516,290,[[1340,312],[1360,312],[1385,300]]), red, 2);
  const green = "#008000", teal = "#20b2aa";
  for (const g of [
    [[100,358],[120,352],[145,345]], [[222,400],[245,230],[267,115],[315,97],[365,97]], [[580,250],[605,120],[627,65],[650,78],[672,65],[700,65]],
    [[998,335],[1035,208],[1060,205]], [[1110,240],[1130,200],[1155,100],[1180,90]], [[1275,205],[1300,82],[1325,105]], [[1420,430],[1440,405],[1470,405]]
  ]) s += line(z(0,290,g), green, 2);
  for (const g of [[[90,435],[115,390],[205,120],[230,90],[255,78]], [[520,170],[545,137],[568,145]], [[735,410],[780,235],[805,215],[830,178]], [[880,110],[905,125]], [[1000,150],[1050,118]], [[1250,400],[1285,300],[1310,290]], [[1385,295],[1408,208]]])
    s += line(z(516,290,g), green, 2);
  for (const g of [[[145,345],[195,452],[222,410]], [[365,97],[390,137]], [[700,65],[760,120]], [[1060,205],[1085,272],[1110,240]], [[1180,90],[1205,103]], [[1228,270],[1250,270],[1275,205]], [[1325,105],[1345,245],[1395,488],[1420,430]], [[1470,405],[1497,445]]])
    s += line(z(0,290,g), teal, 1);
  for (const g of [[[70,470],[90,435]], [[305,168],[325,135]], [[568,145],[590,205]], [[830,178],[860,198],[880,110]], [[930,130],[975,210],[1000,150]], [[1050,118],[1075,190]], [[1215,485],[1250,400]], [[1310,290],[1335,300],[1360,312],[1385,295]]])
    s += line(z(516,290,g), teal, 1);
  s += `<rect x="10" y="327" width="976" height="2" fill="#000"/><rect x="10" y="420" width="976" height="2" fill="#000"/>`;

  // sub window strip
  s += `<rect x="9" y="454" width="977" height="14" fill="#fff"/>`;
  s += tx("Stochastic Alert(14,3,3) 57.1429 52.3810 1.4311 1.4304 57.1429", 13, 470, 265);
  s += `<rect x="9" y="467" width="977" height="10" fill="#fff"/>`;
  s += `<rect x="9" y="458" width="977" height="2" fill="#f00"/><rect x="9" y="463" width="977" height="2" fill="#f00"/>`;
  for (const [x, w] of [[10,24],[70,30],[300,14],[120,20],[420,40],[700,20],[880,40],[960,25]]) s += `<rect x="${x}" y="460" width="${w}" height="2" fill="#f00"/>`;
  for (const [x, w] of [[90,30],[105,20],[225,8],[560,20],[800,30],[845,60],[955,16]]) s += `<rect x="${x}" y="${x % 2 ? 459 : 458}" width="${w}" height="2" fill="#008000"/>`;

  // macd, histogram tops in zoomed units (243 is the zero line)
  const all = [215,218,222,220,222,232,237,243,241,233,232,233,222,222,222,222,222,218,218,222,222,225,225,222,210,188,168,135,113,105,97,84,75,75,78,81,78,92,102,
    90,90,90,90,90,90,90,90,90,90,90,90,90,90,147,150,153,168,188,207,213,222,240,255,273,293,
    318,345,380,395,402,402,390,384,372,365,357,351,342,324,312,291,276,270,264,258,252,241,234,231,234,237,240,243,255,258,258,258,255,255,249,249,231,219,213,210,204,186,183,177,177,177,186,195,210,222,241,252,252,255,264,267,270,273,258];
  all.forEach((v, k) => {
    const x = X(k), top = 450 + Math.min(v, 243) / 3, bot = 450 + Math.max(v, 243) / 3;
    s += `<rect x="${x + (k ? -1 : 0)}" y="${top}" width="${k ? 5 : 4}" height="${bot - top}" fill="#0000cd"/>`;
  });
  s += line(z(0,450,[[27,232],[80,222],[170,222],[220,230],[380,230],[420,225],[510,220],[600,220],[640,212],[700,185],[760,155],[820,115],[880,90],[942,83],[1276,137],[1320,140],[1370,155],[1420,170],[1470,187],[1510,210],[1548,232]]).concat(z(516,450,[[30,262],[80,305],[130,345],[200,375],[260,381],[300,375],[350,352],[400,332],[450,305],[500,285],[550,260],[590,250],[640,242],[680,240],[730,245],[800,245],[830,252],[880,252],[930,243],[980,228],[1040,208],[1110,190],[1165,188],[1220,203],[1280,222],[1330,238],[1380,252],[1408,259]])), red, 2);

  // frames
  for (const [t, b] of [[108,293],[295,453],[455,466],[468,589],[591,601]]) {
    s += `<rect x="${L}.5" y="${t}.5" width="${RIGHT - L}" height="${b - t}" fill="none" stroke="#000"/>`;
  }
  s += `<path d="M9 601V596L14 601z" fill="#bbb"/>`;
  s += `<path d="M746 109h8l-4 4z" fill="#aaa"/>`;
  document.getElementById("plot").innerHTML = s;

  // window headers
  document.getElementById("heads").innerHTML =
    tx("EURUSD,M1", 13, 120, 55) + tx("1.4307", 74, 120, 27) + tx("1.4307", 105, 120, 27) + tx("1.4307", 136, 120, 27) + tx("1.4307", 167, 120, 27) +
    tx("0 minutes 59 seconds left to bar end", 13, 131, 148) +
    tx("Stochastic Alert(8,3,3)", 13, 309, 91) + tx("52.3810", 106, 309, 33) + tx("59.7619", 143, 309, 33) + tx("1.4311", 179, 309, 28) + tx("1.4304", 210, 309, 27) + tx("52.3810", 241, 309, 33) +
    tx("MACD(12,26,9)", 13, 482, 66) + tx("-0.00011", 82, 482, 36) + tx("-0.00014", 121, 482, 36);

  // masks: pasted white boxes over the chart
  document.getElementById("masks").innerHTML = [
    [297,211,175,66],[605,242,131,93],[314,401,111,109],[594,453,143,50]
  ].map(([x, y, w, h]) => `<rect x="${x}" y="${y}" width="${w}" height="${h}" fill="#fff"/>`).join("")
    + `<rect x="130" y="137" width="70" height="6" fill="#fff"/>
       <text x="130" y="142" fill="#999" style="font-size:14px;clip-path:inset(0 0 50% 0)" textLength="64">IndicatorE</text>
       <path d="M906 118h6M920 118h10M935 118h14" stroke="#000" stroke-dasharray="2 2"/>
       <path d="M975 115l6 6M981 115l-6 6" stroke="#000" stroke-width="2"/>`;

  // axis
  let a = `<path d="M${RIGHT}.5 108V601" stroke="#000"/>`;
  for (const [t, y, x, w] of [["1.4325",132,993,25],["1.4315",178,993,25],["1.4305",224,993,25],["1.4295",270,993,25],["100",302,991,15],["0",446,991,5],["0.00045",476,990,33],["0.00",530,990,18],["-0.00042",583,989,36]]) {
    a += `<path d="M${RIGHT} ${y}h3" stroke="#000"/>` + tx(t, x, y + 4, w);
  }
  a += `<rect x="987" y="209" width="37" height="12" fill="#000"/>` + tx("1.4307", 991, 219, 26, "#fff");
  for (const [t, y] of [["80",328],["20",421]]) a += `<rect x="989" y="${y - 5}" width="10" height="10" fill="#000"/>` + tx(t, 989, y + 4, 10, "#fff");
  a += tx("100", 991, 467, 15) + tx("80", 989, 463, 11, "#f00");
  ["28 Jul 2011","28 Jul 20:11","28 Jul 20:20","28 Jul 20:28","28 Jul 20:36","28 Jul 20:44","28 Jul 20:52","28 Jul 21:00","28 Jul 21:08","28 Jul 21:16","28 Jul 21:24","28 Jul 21:32","28 Jul 21:40","28 Jul 21:49","28 Jul 21:57","28 Jul 22:05"]
    .forEach((t, i) => { const x = 9 + 64 * i; a += `<path d="M${x} 601v3" stroke="#000"/>` + tx(t, x - 1, 615, i ? 50 : 46); });
  document.getElementById("axis").innerHTML = a;
</script>
</body>
</html>
